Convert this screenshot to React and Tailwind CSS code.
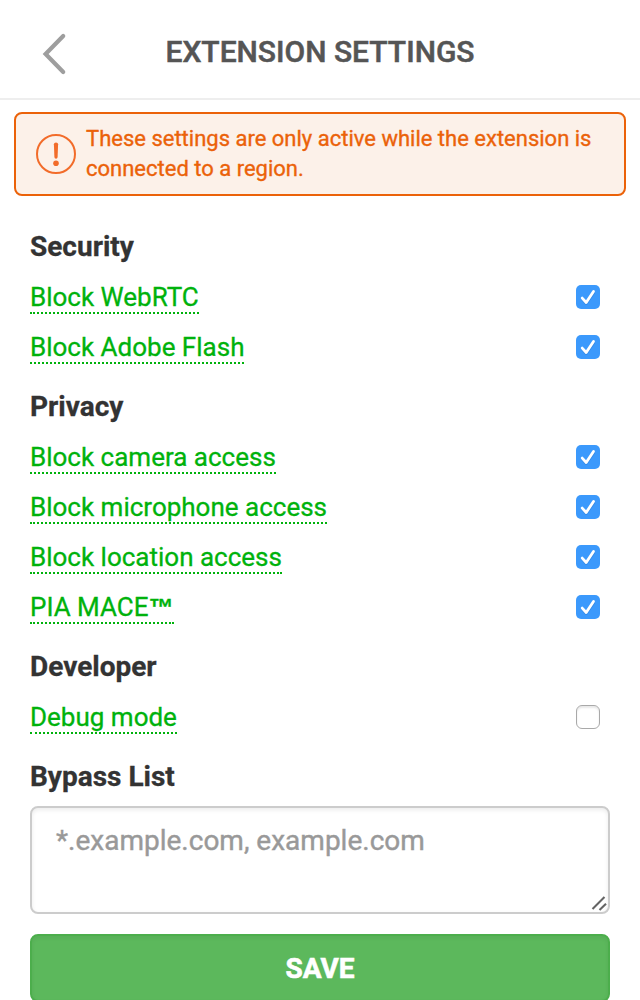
import React from "react";

const sections = [
  { title: "Security", items: [["Block WebRTC", true], ["Block Adobe Flash", true]] },
  {
    title: "Privacy",
    items: [
      ["Block camera access", true],
      ["Block microphone access", true],
      ["Block location access", true],
      ["PIA MACE™", true],
    ],
  },
  { title: "Developer", items: [["Debug mode", false]] },
];

function Heading({ children }) {
  return (
    <h2 className="flex h-[60px] items-center pt-2.5 text-[28px] leading-8 font-bold text-[#333333] [-webkit-text-stroke:0.3px_#333333]">
      {children}
    </h2>
  );
}

function Checkbox({ checked, label }) {
  return (
    <span
      role="checkbox"
      aria-checked={checked}
      aria-label={label}
      className={
        checked
          ? "flex size-6 items-center justify-center rounded-[5px] bg-[#3b99fc]"
          : "flex size-6 rounded-[6px] border border-[#a9a9a9] bg-white shadow-[inset_0_2px_2px_#e8e8e8]"
      }
    >
      {checked && (
        <svg width="24" height="24" viewBox="0 0 24 24" fill="none">
          <path d="M6.4 14.2L10.2 18.7L17.8 7.8" stroke="#2670c4" strokeOpacity="0.4" strokeWidth="2.6" strokeLinecap="round" strokeLinejoin="round" />
          <path d="M6.2 13.1L10.2 17.5L17.5 6.4" stroke="white" strokeWidth="2.8" strokeLinecap="round" strokeLinejoin="round" />
        </svg>
      )}
    </span>
  );
}

function Setting({ label, checked }) {
  return (
    <div className="flex h-[50px] items-center justify-between pr-[10px]">
      <span className="mt-px h-[33px] border-b-2 border-dotted border-[#00b20c] text-[26px] leading-8 text-[#00b20c] [-webkit-text-stroke:0.3px_#00b20c]">
        {label.replace("™", "")}
        {label.endsWith("™") && (
          <span className="font-['Liberation_Sans',sans-serif] text-[25px] leading-none font-bold">™</span>
        )}
      </span>
      <Checkbox checked={checked} label={label} />
    </div>
  );
}

export default function App() {
  return (
    <div className="h-[1000px] w-[640px] overflow-hidden bg-white font-['Roboto',sans-serif]">
      <header className="flex h-[100px] items-center border-b-2 border-[#eeeeee]">
        <svg className="ml-10 mt-[9px]" width="28" height="44" viewBox="0 0 28 44" fill="none">
          <path d="M23.2 4L5.6 22L23.2 40" stroke="#9e9e9e" strokeWidth="4.2" strokeLinecap="round" strokeLinejoin="miter" />
        </svg>
        <h1 className="mb-[-5px] mr-[68px] flex-1 text-center text-[30px] leading-9 font-medium text-[#555555] [-webkit-text-stroke:0.5px_#555555]">
          EXTENSION SETTINGS
        </h1>
      </header>

      <div className="mx-[14px] mt-3 flex h-[84px] items-center rounded-lg border-2 border-[#eb6209] bg-[#fcf1e9] pl-5">
        <svg className="shrink-0" width="40" height="40" viewBox="0 0 40 40">
          <circle cx="20" cy="20" r="19" fill="none" stroke="#f26c2a" strokeWidth="2" />
          <path d="M17.9 10.2Q17.9 8.4 20 8.4Q22.1 8.4 22.1 10.2L21.6 22.9Q21.5 24.7 20 24.7Q18.5 24.7 18.4 22.9Z" fill="#f26c2a" />
          <circle cx="20" cy="29.2" r="2.8" fill="#f26c2a" />
        </svg>
        <p className="ml-[10px] w-[520px] text-[22px] leading-[30px] text-[#eb6209] [-webkit-text-stroke:0.35px_#eb6209]">
          These settings are only active while the extension is connected to a region.
        </p>
      </div>

      <main className="px-[30px] pt-4">
        {sections.map((section) => (
          <section key={section.title}>
            <Heading>{section.title}</Heading>
            {section.items.map(([label, checked]) => (
              <Setting key={label} label={label} checked={checked} />
            ))}
          </section>
        ))}
        <Heading>Bypass List</Heading>
        <div className="relative mt-1 h-[108px] rounded-lg border-2 border-[#cccccc] bg-white px-6 pt-[17px] text-[28px] leading-8 text-[#999999] shadow-[inset_0_2px_4px_rgba(0,0,0,0.08)] [-webkit-text-stroke:0.4px_#999999]">
          *.example.com, example.com
          <svg className="absolute right-px bottom-px" width="16" height="16" viewBox="0 0 16 16" fill="none">
            <path d="M1.5 14L13.5 2M8.5 15L15 8.8" stroke="#646464" strokeWidth="2.1" />
          </svg>
        </div>
        <button className="mt-5 flex h-[68px] w-full items-center justify-center rounded-lg border-2 border-[#4cae4c] bg-[#5cb85c] pt-0.5 text-[28px] leading-8 font-bold text-white shadow-[inset_0_2px_4px_rgba(0,0,0,0.06)] [-webkit-text-stroke:0.6px_white]">
          SAVE
        </button>
      </main>
    </div>
  );
}
